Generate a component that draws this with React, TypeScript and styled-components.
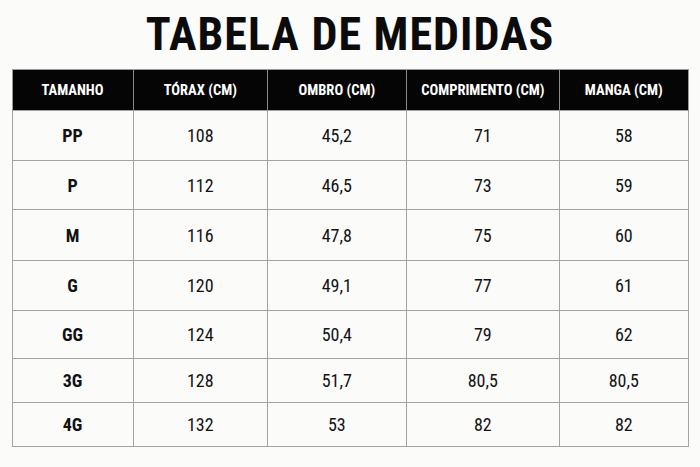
import { createGlobalStyle } from "styled-components";
import styled from "styled-components";

const GlobalStyle = createGlobalStyle`
  html, body {
    margin: 0;
    padding: 0;
    background: #fbfbfa;
  }
  body {
    font-family: "Roboto Condensed", "Liberation Sans Narrow", "DejaVu Sans Condensed", Roboto, sans-serif;
    color: #111;
  }
`;

const Page = styled.div`
  width: 700px;
  height: 467px;
  display: flex;
  flex-direction: column;
  align-items: center;
  box-sizing: border-box;
  padding-top: 1px;
`;

const Title = styled.h1`
  margin: 0 0 2px;
  height: 66px;
  font-size: 46px;
  line-height: 66px;
  font-weight: 700;
  letter-spacing: 1px;
  color: #0b0b0b;
`;

const Table = styled.table`
  width: 677px;
  border-collapse: collapse;
  table-layout: fixed;
  text-align: center;
`;

const Col = styled.col<{ $w: number }>`
  width: ${(p) => p.$w}%;
`;

const HeadCell = styled.th`
  height: 40px;
  padding: 0;
  background: #050505;
  color: #fff;
  font-size: 14.5px;
  font-weight: 700;
  border-left: 1px solid #8a8a8a;
  border-top: 1px solid #9a9a9a;
  &:first-child {
    border-left: 1px solid #9a9a9a;
  }
  &:last-child {
    border-right: 1px solid #9a9a9a;
  }
`;

const Row = styled.tr<{ $h: number }>`
  height: ${(p) => p.$h}px;
`;

const Cell = styled.td<{ $bold?: boolean }>`
  padding: 0;
  border: 1px solid #a3a3a3;
  font-size: 18px;
  font-weight: ${(p) => (p.$bold ? 700 : 400)};
  color: #121212;
`;

const columns = [
  { label: "TAMANHO", w: 17.9 },
  { label: "TÓRAX (CM)", w: 19.9 },
  { label: "OMBRO (CM)", w: 20.5 },
  { label: "COMPRIMENTO (CM)", w: 22.7 },
  { label: "MANGA (CM)", w: 19 },
];

const rows = [
  { h: 50, v: ["PP", "108", "45,2", "71", "58"] },
  { h: 49, v: ["P", "112", "46,5", "73", "59"] },
  { h: 51, v: ["M", "116", "47,8", "75", "60"] },
  { h: 50, v: ["G", "120", "49,1", "77", "61"] },
  { h: 48, v: ["GG", "124", "50,4", "79", "62"] },
  { h: 44, v: ["3G", "128", "51,7", "80,5", "80,5"] },
  { h: 44, v: ["4G", "132", "53", "82", "82"] },
];

export default function App() {
  return (
    <>
      <GlobalStyle />
      <Page>
        <Title>TABELA DE MEDIDAS</Title>
        <Table>
          <colgroup>
            {columns.map((c) => (
              <Col key={c.label} $w={c.w} />
            ))}
          </colgroup>
          <thead>
            <tr>
              {columns.map((c) => (
                <HeadCell key={c.label}>{c.label}</HeadCell>
              ))}
            </tr>
          </thead>
          <tbody>
            {rows.map((r) => (
              <Row key={r.v[0]} $h={r.h}>
                {r.v.map((v, i) => (
                  <Cell key={i} $bold={i === 0}>
                    {v}
                  </Cell>
                ))}
              </Row>
            ))}
          </tbody>
        </Table>
      </Page>
    </>
  );
}
